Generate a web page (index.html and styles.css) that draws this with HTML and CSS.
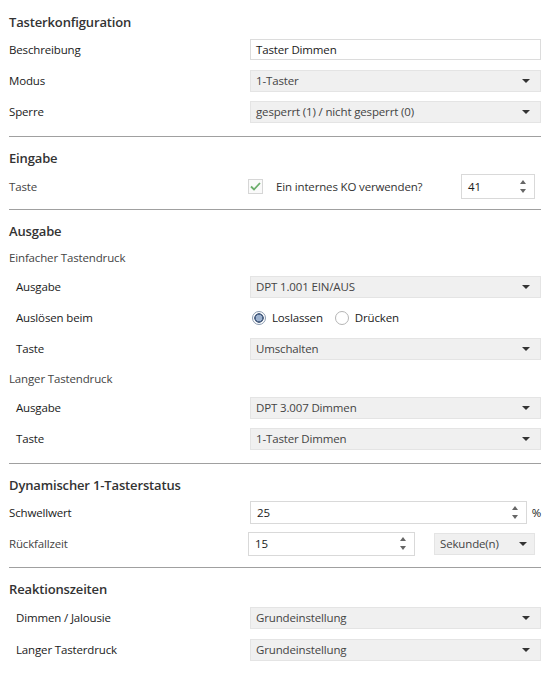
FILE: index.html
```html
<!DOCTYPE html>
<html lang="de">
<head>
<meta charset="utf-8">
<title>Tasterkonfiguration</title>
<link rel="stylesheet" href="styles.css">
</head>
<body>
<div class="page">
  <section class="sec sec-first">
    <h2 class="sec-title">Tasterkonfiguration</h2>
    <div class="row"><span class="label">Beschreibung</span><div class="ctrl"><div class="textbox">Taster Dimmen</div></div></div>
    <div class="row"><span class="label">Modus</span><div class="ctrl"><div class="select"><span>1-Taster</span><i class="caret"></i></div></div></div>
    <div class="row"><span class="label">Sperre</span><div class="ctrl"><div class="select"><span>gesperrt (1) / nicht gesperrt (0)</span><i class="caret"></i></div></div></div>
  </section>
  <hr class="sep">
  <section class="sec">
    <h2 class="sec-title">Eingabe</h2>
    <div class="row row-check"><span class="label muted">Taste</span>
      <div class="ctrl flex">
        <span class="checkbox"><svg width="11" height="9" viewBox="0 0 11 9"><path d="M1 4.5 L4 7.5 L10 1" fill="none" stroke="#6cae6c" stroke-width="1.8"/></svg></span>
        <span class="check-text">Ein internes KO verwenden?</span>
        <div class="numbox num-ko"><span>41</span><span class="spin"><i class="up"></i><i class="down"></i></span></div>
      </div>
    </div>
  </section>
  <hr class="sep">
  <section class="sec sec-out">
    <h2 class="sec-title">Ausgabe</h2>
    <div class="subhead">Einfacher Tastendruck</div>
    <div class="row"><span class="label indent">Ausgabe</span><div class="ctrl"><div class="select"><span>DPT 1.001 EIN/AUS</span><i class="caret"></i></div></div></div>
    <div class="row"><span class="label indent">Auslösen beim</span>
      <div class="ctrl flex">
        <span class="radio checked"></span><span class="radio-text">Loslassen</span>
        <span class="radio"></span><span class="radio-text">Drücken</span>
      </div>
    </div>
    <div class="row"><span class="label indent">Taste</span><div class="ctrl"><div class="select"><span>Umschalten</span><i class="caret"></i></div></div></div>
    <div class="subhead">Langer Tastendruck</div>
    <div class="row"><span class="label indent">Ausgabe</span><div class="ctrl"><div class="select"><span>DPT 3.007 Dimmen</span><i class="caret"></i></div></div></div>
    <div class="row"><span class="label indent">Taste</span><div class="ctrl"><div class="select"><span>1-Taster Dimmen</span><i class="caret"></i></div></div></div>
  </section>
  <hr class="sep">
  <section class="sec">
    <h2 class="sec-title">Dynamischer 1-Tasterstatus</h2>
    <div class="row"><span class="label">Schwellwert</span>
      <div class="ctrl flex">
        <div class="numbox num-schwell"><span>25</span><span class="spin"><i class="up"></i><i class="down"></i></span></div>
        <span class="unit">%</span>
      </div>
    </div>
    <div class="row"><span class="label muted">Rückfallzeit</span>
      <div class="ctrl flex">
        <div class="numbox num-rueck"><span>15</span><span class="spin"><i class="up"></i><i class="down"></i></span></div>
        <div class="select select-unit"><span>Sekunde(n)</span><i class="caret"></i></div>
      </div>
    </div>
  </section>
  <hr class="sep">
  <section class="sec sec-react">
    <h2 class="sec-title">Reaktionszeiten</h2>
    <div class="row"><span class="label indent">Dimmen / Jalousie</span><div class="ctrl"><div class="select"><span>Grundeinstellung</span><i class="caret"></i></div></div></div>
    <div class="row"><span class="label indent">Langer Tasterdruck</span><div class="ctrl"><div class="select"><span>Grundeinstellung</span><i class="caret"></i></div></div></div>
  </section>
</div>
</body>
</html>
```

FILE: styles.css
```css
* { box-sizing: border-box; }
html, body { margin: 0; padding: 0; background: #fff; }
body {
  font-family: "Open Sans", "Noto Sans", "Liberation Sans", sans-serif;
  font-size: 11.5px;
  color: #1a1a1a;
  letter-spacing: -0.15px;
}
.page { padding: 0 13px 0 9px; }
.sec { padding-top: 11px; padding-bottom: 8px; }
.sec-first { padding-top: 12px; padding-bottom: 9px; }
.sec-out { padding-bottom: 9px; }
.sec-title {
  margin: 0 0 2px 0;
  height: 20px;
  line-height: 20px;
  font-size: 13px;
  font-weight: 600;
  color: #333;
}
.row {
  display: grid;
  grid-template-columns: 241px 1fr;
  align-items: center;
  height: 31px;
}
.row-check { padding-top: 2px; }
.sec-react .row { height: 32px; padding-top: 1px; }
.label { white-space: nowrap; }
.label.indent { padding-left: 7px; }
.muted { color: #444; }
.subhead { height: 28px; line-height: 30px; color: #444; }
.ctrl { min-width: 0; }
.flex { display: flex; align-items: center; }
.textbox {
  height: 21px;
  border: 1px solid #dcdcdc;
  background: #fff;
  padding: 0 5px;
  display: flex;
  align-items: center;
  color: #1a1a1a;
}
.select {
  height: 22px;
  border: 1px solid #e4e4e4;
  background: #f0f0f0;
  display: flex;
  align-items: center;
  justify-content: space-between;
  padding: 0 10px 0 5px;
  color: #444;
}
.caret {
  width: 0; height: 0;
  border-left: 4px solid transparent;
  border-right: 4px solid transparent;
  border-top: 4px solid #333;
}
.checkbox {
  width: 15px; height: 15px;
  margin-left: -2px;
  border: 1px solid #d6d6d6;
  background: #fafafa;
  display: flex; align-items: center; justify-content: center;
}
.check-text { margin-left: 13px; color: #333; }
.numbox {
  border: 1px solid #d9d9d9;
  background: #fff;
  display: flex;
  align-items: center;
  justify-content: space-between;
  padding: 0 8px 0 6px;
  color: #1a1a1a;
}
.num-ko { margin-left: auto; margin-right: 6px; width: 74px; height: 25px; }
.num-schwell { width: 277px; height: 23px; }
.num-rueck { margin-left: -2px; width: 167px; height: 24px; }
.spin { display: flex; flex-direction: column; align-items: center; gap: 5px; }
.spin .up {
  width: 0; height: 0;
  border-left: 3px solid transparent;
  border-right: 3px solid transparent;
  border-bottom: 4px solid #666;
}
.spin .down {
  width: 0; height: 0;
  border-left: 3px solid transparent;
  border-right: 3px solid transparent;
  border-top: 4px solid #666;
}
.unit { margin-left: 5px; color: #1a1a1a; }
.select-unit { width: 101px; margin-left: 19px; padding-right: 7px; }
.radio {
  width: 14px; height: 14px;
  border-radius: 50%;
  border: 1px solid #b5b5b5;
  background: #fff;
  margin-left: 2px;
}
.radio.checked {
  border-color: #8b9bb0;
  background: radial-gradient(circle, #9db2cf 0 3px, #4e6485 3.5px 4.5px, #fff 5px);
}
.radio-text { margin-left: 6px; margin-right: 10px; }
.sep {
  margin: 0;
  border: 0;
  height: 1px;
  background: #a0a0a0;
}
```
